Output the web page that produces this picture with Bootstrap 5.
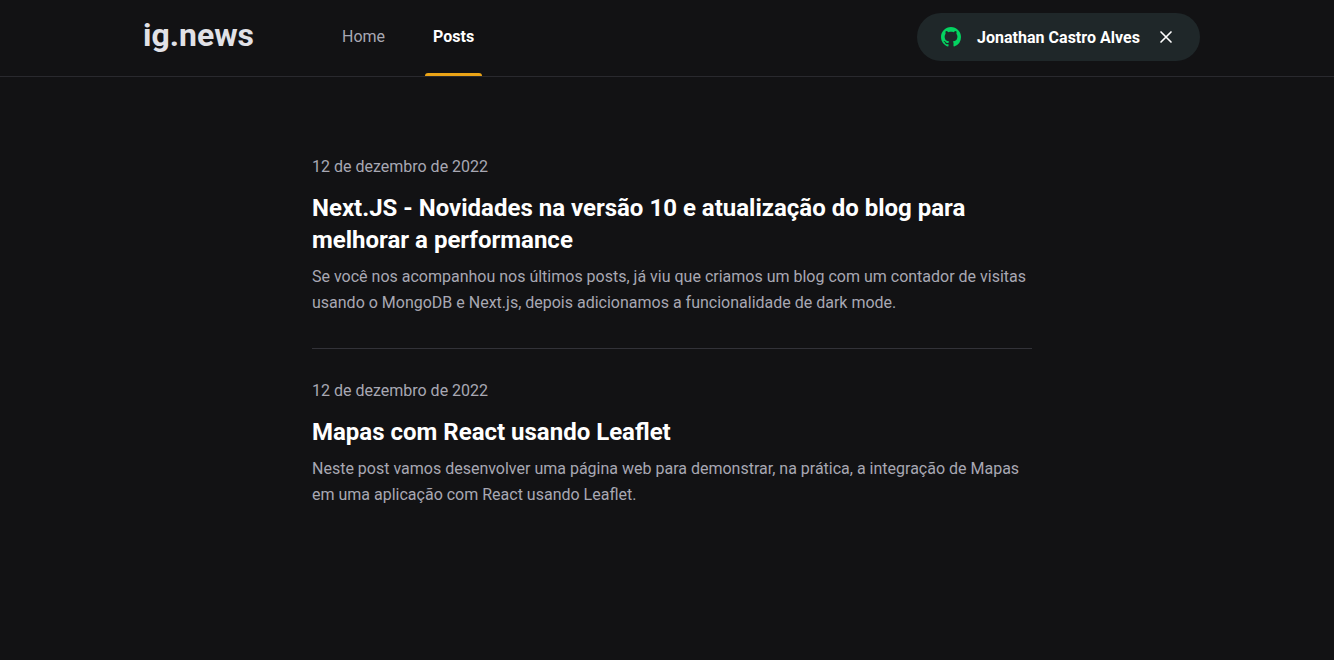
<!DOCTYPE html>
<html lang="pt-BR">
<head>
<meta charset="utf-8">
<meta name="viewport" content="width=device-width, initial-scale=1">
<title>Posts | ig.news</title>
<link rel="stylesheet" href="https://cdn.jsdelivr.net/npm/bootstrap@5.3.0/dist/css/bootstrap.min.css">
<style>
body { background: #121214; color: #a8a8b3; font-family: Roboto, "Liberation Sans", sans-serif; font-size: 16px; overflow: hidden; }
.site-header { height: 77px; border-bottom: 1px solid #29292e; }
.header-inner { width: 1056px; margin-left: 144px; }
.logo { width: 110px; height: 72px; }
.logo text { font-size: 32px; font-weight: 700; fill: #e1e1e6; }
.main-nav { margin-left: 80px; gap: 32px; }
.main-nav .nav-link { height: 76px; line-height: 73px; padding: 0 8px; color: #a8a8b3; }
.main-nav .nav-link.active { color: #fff; font-weight: 700; position: relative; }
.main-nav .nav-link.active::after { content: ""; position: absolute; left: 0; bottom: 0; width: 100%; height: 3px; border-radius: 3px 3px 0 0; background: #eba417; }
.user-btn { height: 48px; width: 283px; margin-top: 13px; padding: 0 24px; background: #1f2729 !important; color: #fff !important; font-weight: 700; border: 0; }
.user-name { padding-top: 2px; letter-spacing: .02px; }
.posts { width: 720px; margin: 80px 0 0 312px; }
.post + .post { border-top: 1px solid #323238; margin-top: 32px; padding-top: 32px; }
.post time { line-height: 19px; }
.post h2 { font-size: 24px; line-height: 32px; font-weight: 700; color: #fff; margin: 16px 0 8px; }
.post p { line-height: 26px; }
</style>
</head>
<body>
<header class="site-header">
  <div class="header-inner d-flex align-items-start">
    <svg class="logo flex-shrink-0 overflow-visible" role="img" aria-label="ig.news"><text x="-1" y="46" textLength="111" lengthAdjust="spacingAndGlyphs">ig.news</text></svg>
    <nav class="nav main-nav">
      <a class="nav-link" href="#">Home</a>
      <a class="nav-link active" href="#" aria-current="page">Posts</a>
    </nav>
    <button type="button" class="btn rounded-pill user-btn ms-auto d-flex align-items-center">
      <svg width="20" height="20" viewBox="0 0 16 16" fill="#04d361" class="flex-shrink-0 me-3"><path d="M8 0C3.58 0 0 3.58 0 8c0 3.54 2.29 6.53 5.47 7.59.4.07.55-.17.55-.38 0-.19-.01-.82-.01-1.49-2.01.37-2.53-.49-2.69-.94-.09-.23-.48-.94-.82-1.13-.28-.15-.68-.52-.01-.53.63-.01 1.08.58 1.23.82.72 1.21 1.87.87 2.33.66.07-.52.28-.87.51-1.07-1.78-.2-3.64-.89-3.64-3.95 0-.87.31-1.59.82-2.15-.08-.2-.36-1.02.08-2.12 0 0 .67-.21 2.2.82.64-.18 1.32-.27 2-.27s1.36.09 2 .27c1.53-1.04 2.2-.82 2.2-.82.44 1.1.16 1.92.08 2.12.51.56.82 1.27.82 2.15 0 3.07-1.87 3.75-3.65 3.95.29.25.54.73.54 1.48 0 1.07-.01 1.93-.01 2.2 0 .21.15.46.55.38A8.01 8.01 0 0 0 16 8c0-4.42-3.58-8-8-8z"/></svg>
      <span class="user-name text-nowrap">Jonathan Castro Alves</span>
      <svg width="20" height="20" viewBox="0 0 24 24" fill="none" stroke="#fff" stroke-width="2" stroke-linecap="round" class="flex-shrink-0 ms-auto"><path d="M18 6 6 18M6 6l12 12"/></svg>
    </button>
  </div>
</header>
<main class="posts">
  <article class="post">
    <time class="d-block" datetime="2022-12-12">12 de dezembro de 2022</time>
    <h2>Next.JS - Novidades na versão 10 e atualização do blog para melhorar a performance</h2>
    <p class="mb-0">Se você nos acompanhou nos últimos posts, já viu que criamos um blog com um contador de visitas usando o MongoDB e Next.js, depois adicionamos a funcionalidade de dark mode.</p>
  </article>
  <article class="post">
    <time class="d-block" datetime="2022-12-12">12 de dezembro de 2022</time>
    <h2>Mapas com React usando Leaflet</h2>
    <p class="mb-0">Neste post vamos desenvolver uma página web para demonstrar, na prática, a integração de Mapas em uma aplicação com React usando Leaflet.</p>
  </article>
</main>
<script src="https://cdn.jsdelivr.net/npm/bootstrap@5.3.0/dist/js/bootstrap.bundle.min.js"></script>
</body>
</html>
